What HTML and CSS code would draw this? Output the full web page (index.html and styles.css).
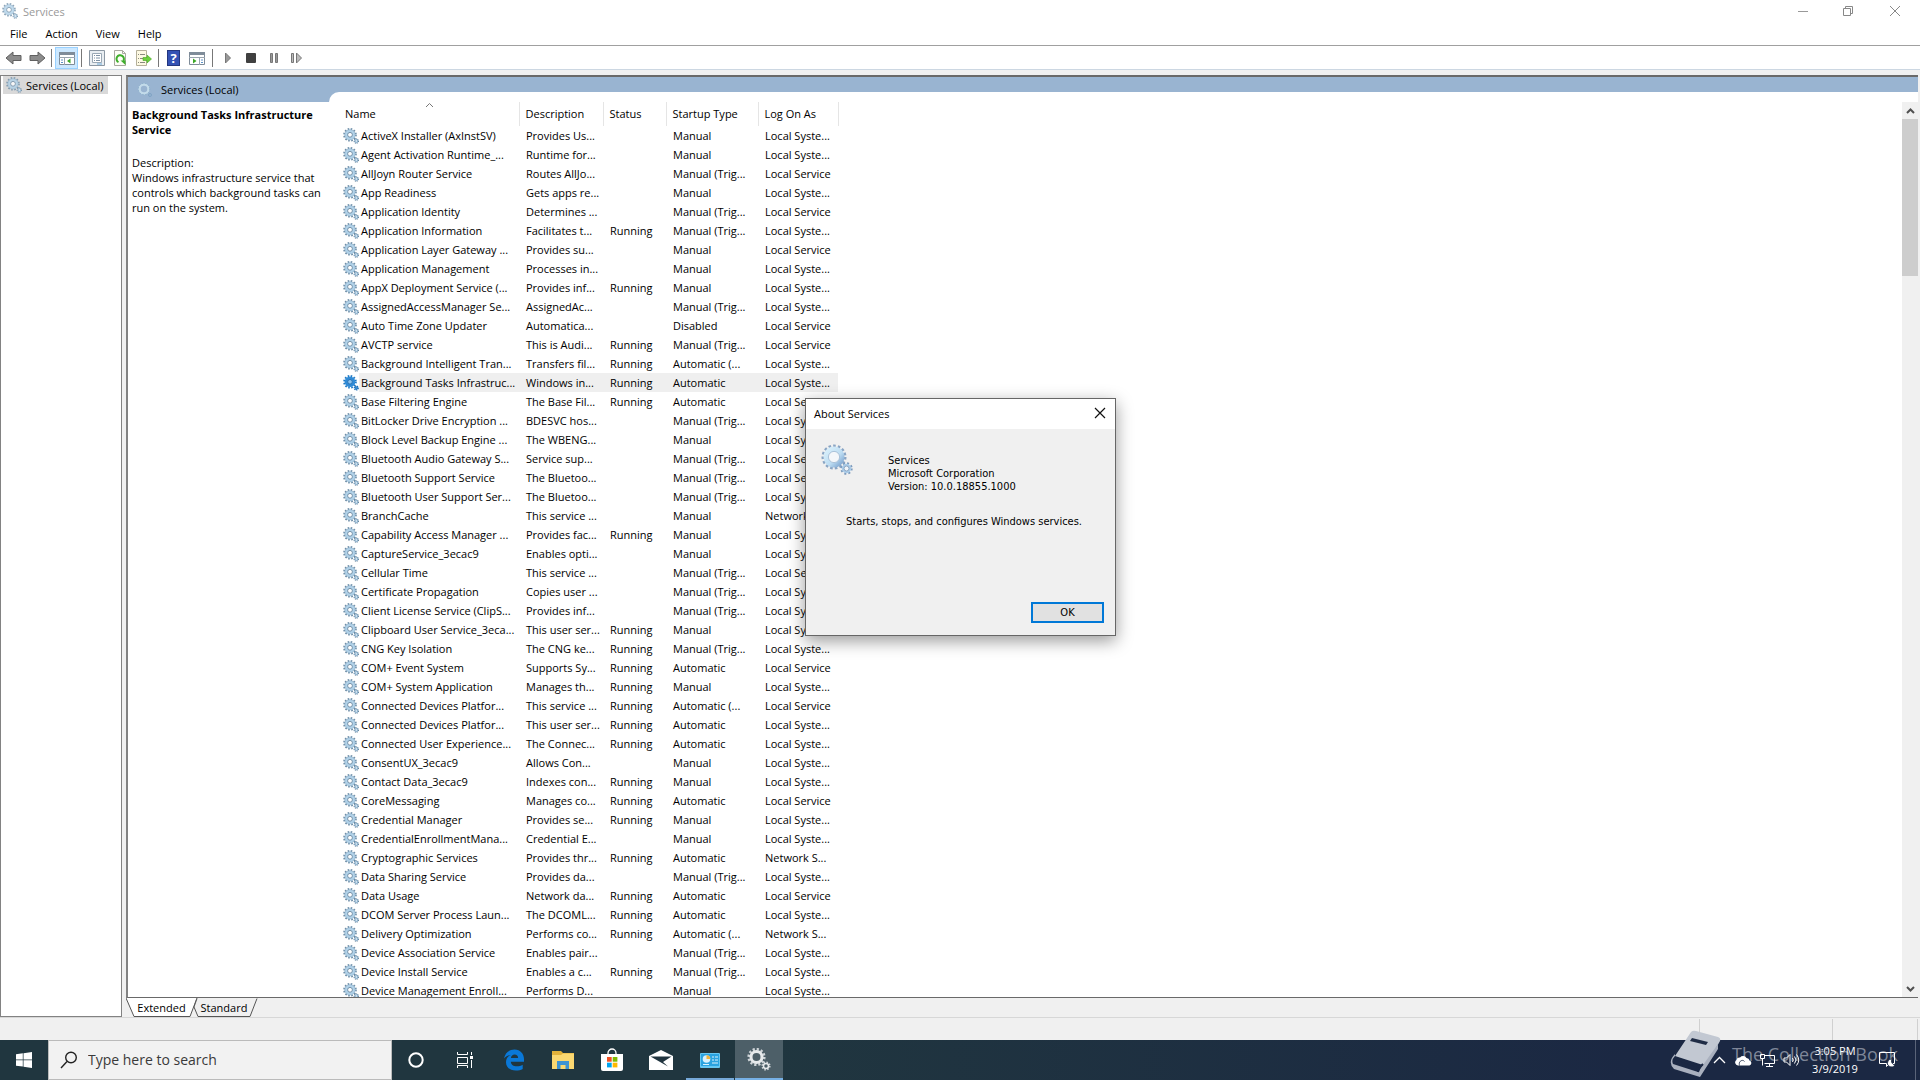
FILE: index.html
```html
<!DOCTYPE html>
<html lang="en">
<head>
<meta charset="utf-8">
<title>Services</title>
<link rel="stylesheet" href="styles.css">
</head>
<body>
<svg class="defs" aria-hidden="true">
  <symbol id="gear" viewBox="0 0 16 16">
    <circle cx="7" cy="6.800" r="5.900" fill="none" stroke="#6b8ba5" stroke-width="1.800" stroke-dasharray="1.600 1.490"/>
    <circle cx="7" cy="6.800" r="3.900" fill="#fff" stroke="#b1d2e9" stroke-width="2.800"/>
    <circle cx="7" cy="6.800" r="5.100" fill="none" stroke="#8fb0c9" stroke-width=".6"/>
    <circle cx="7" cy="6.800" r="2.400" fill="none" stroke="#64859f" stroke-width=".9"/>
    <circle cx="13.300" cy="13" r="2.100" fill="none" stroke="#5f7f99" stroke-width="1.200" stroke-dasharray="1 .65"/>
    <circle cx="13.300" cy="13" r="1.300" fill="#fff" stroke="#8fb4d0" stroke-width="1.200"/>
  </symbol>
  <symbol id="gear-selected" viewBox="0 0 16 16">
    <circle cx="7" cy="6.800" r="5.900" fill="none" stroke="#1d78c4" stroke-width="1.800" stroke-dasharray="1.600 1.490"/>
    <circle cx="7" cy="6.800" r="3.900" fill="#8fc3ee" stroke="#2f8ad6" stroke-width="2.800"/>
    <circle cx="7" cy="6.800" r="2.300" fill="none" stroke="#0f5ea5" stroke-width=".8"/>
    <circle cx="13.300" cy="13" r="1.800" fill="#3b8fd6" stroke="#1b6db5" stroke-width="1.600" stroke-dasharray="1 .65"/>
  </symbol>
  <linearGradient id="steel" x1="0" y1="0" x2="1" y2="1"><stop offset="0" stop-color="#d9f0fb"/><stop offset=".6" stop-color="#bcdcf2"/><stop offset="1" stop-color="#7fa6d0"/></linearGradient>
  <symbol id="gear-large" viewBox="0 0 34 34">
    <circle cx="14" cy="14" r="11.200" fill="none" stroke="#8aa5c4" stroke-width="2.600" stroke-dasharray="2.600 2.090"/>
    <circle cx="14" cy="14" r="8" fill="none" stroke="url(#steel)" stroke-width="5"/>
    <circle cx="14" cy="14" r="5.600" fill="#f4f7fa" stroke="#9db8d2" stroke-width=".8"/>
    <circle cx="26.500" cy="25.500" r="5.200" fill="none" stroke="#7d9bbd" stroke-width="2" stroke-dasharray="2 2.080"/>
    <circle cx="26.500" cy="25.500" r="3.700" fill="#f0f4f8" stroke="#a9cbe8" stroke-width="2"/>
    <circle cx="26.500" cy="25.500" r="2.500" fill="none" stroke="#6f8fb3" stroke-width=".8"/>
  </symbol>
  <symbol id="up" viewBox="0 0 9 6"><path d="M1 5 4.500 1.500 8 5" fill="none" stroke="currentColor" stroke-width="2"/></symbol>
</svg>

<header class="titlebar">
  <svg class="icon16 faded"><use href="#gear"/></svg>
  <h1 class="titlebar-text">Services</h1>
  <button class="winbtn" aria-label="Minimize"><svg width="12" height="12"><path d="M1 6.500h10" stroke="#999"/></svg></button>
  <button class="winbtn" aria-label="Restore"><svg width="12" height="12" fill="none" stroke="#888"><path d="M1.500 3.500h7v7h-7zM3.500 3.500v-2h7v7h-2"/></svg></button>
  <button class="winbtn" aria-label="Close"><svg width="12" height="12"><path d="M1 1l10 10M11 1 1 11" stroke="#888"/></svg></button>
</header>

<nav class="menubar" aria-label="Menu">
  <button>File</button><button>Action</button><button>View</button><button>Help</button>
</nav>

<div class="toolbar" role="toolbar">
  <button aria-label="Back"><svg width="18" height="16"><path d="M1 8l7-6v3.500h8v5H8V14z" fill="#8c8c8c" stroke="#606060"/></svg></button>
  <button aria-label="Forward"><svg width="18" height="16"><path d="M17 8l-7-6v3.500H2v5h8V14z" fill="#8c8c8c" stroke="#606060"/></svg></button>
  <span class="tool-sep"></span>
  <button class="pressed" aria-label="Show console tree"><svg width="18" height="16"><path d="M1.500 2.500h15v12h-15z" fill="#fff" stroke="#7f8c99"/><path d="M1 2h16v3H1z" fill="#7f8c99"/><path d="M1 7.500h16M6.500 7v8" stroke="#9aa5b0"/><path d="M3 10h2M3 12.500h2" stroke="#5c92c8"/><path d="M12.500 8.500v5L9 11z" fill="#3ba726"/></svg></button>
  <span class="tool-sep"></span>
  <button aria-label="Properties"><svg width="16" height="16"><path d="M.5.500h15v15H.5z" fill="#e9eef2" stroke="#8b97a3"/><path d="M3.500 3.500h9v9h-9z" fill="#fff" stroke="#9aa8b5"/><path d="M5 5.500h1M7 5.500h4M5 8h1M7 8h4M5 10.500h1M7 10.500h4" stroke="#7f93a6"/><path d="M8 14h5" stroke="#6aa9d8"/></svg></button>
  <button class="wide" aria-label="Refresh"><svg width="14" height="16"><path d="M1.500.500h8l3 3v12h-11z" fill="#fdfdf6" stroke="#a8a8a0"/><path d="M9.500.500v3h3" fill="none" stroke="#a8a8a0"/><path d="M5.500 12.200a3.700 3.700 0 1 1 4.800-1.200" fill="none" stroke="#3faf2c" stroke-width="2"/><path d="M7.500 10.500h5V15z" fill="#3faf2c"/></svg></button>
  <button aria-label="Export list"><svg width="17" height="16"><path d="M1.500.500h10v15h-10z" fill="#fdf9e3" stroke="#b5b09a"/><path d="M3 4.500h1M5 4.500h5M3 8.500h1M5 8.500h4M3 12.500h1M5 12.500h5" stroke="#8a8a80"/><path d="M8 7.500h4V5l4.500 4-4.500 4v-2.500H8z" fill="#6bd03c" stroke="#47a424" stroke-width=".6"/></svg></button>
  <span class="tool-sep"></span>
  <button aria-label="Help"><span class="help-icon">?</span></button>
  <button class="wide" aria-label="Show action pane"><svg width="18" height="16"><path d="M1.500 2.500h15v12h-15z" fill="#fff" stroke="#7f8c99"/><path d="M1 2h16v3H1z" fill="#7f8c99"/><path d="M1 7.500h16M11.500 7v8" stroke="#9aa5b0"/><path d="M13 10h2M13 12.500h2" stroke="#5c92c8"/><path d="M5 8.500v5L8.500 11z" fill="#3ba726"/></svg></button>
  <span class="tool-sep"></span>
  <button aria-label="Start service"><svg width="14" height="14"><path d="M4.500 2v10l5-5z" fill="#999" stroke="#777"/></svg></button>
  <button aria-label="Stop service"><svg width="12" height="14"><rect x="1" y="2" width="10" height="10" rx="1" fill="#404040"/></svg></button>
  <button aria-label="Pause service"><svg width="12" height="14"><path d="M2.500 2.500h2v9h-2zM7.500 2.500h2v9h-2z" fill="#999" stroke="#777"/></svg></button>
  <button aria-label="Restart service"><svg width="14" height="14"><path d="M1.500 2.500h2v9h-2zM6.500 2v10l5-5z" fill="#bbb" stroke="#777"/></svg></button>
</div>

<main class="workspace">
  <aside class="tree">
    <a class="tree-node" href="#list"><svg class="icon16 faded"><use href="#gear"/></svg>Services (Local)</a>
  </aside>

  <section class="snapin">
    <div class="panel">
      <div class="info">
        <div class="info-head"><svg class="icon14"><circle cx="6" cy="6" r="4.500" fill="none" stroke="#c3dbea" stroke-width="2.500"/><circle cx="6" cy="6" r="5.700" fill="none" stroke="#84a9c6" stroke-width=".8" stroke-dasharray="1.500 1.500"/><circle cx="12" cy="12" r="1.500" fill="none" stroke="#7fa3c4"/></svg><h2>Services (Local)</h2></div>
        <div class="info-body">
          <h3>Background Tasks Infrastructure Service</h3>
          <p class="info-label">Description:</p>
          <p>Windows infrastructure service that controls which background tasks can run on the system.</p>
        </div>
      </div>
      <div class="list" id="list">
        <div class="list-scroll">
          <table class="services">
            <colgroup><col class="c-name"><col class="c-desc"><col class="c-status"><col class="c-start"><col class="c-logon"></colgroup>
            <thead><tr><th class="sorted">Name<svg class="sort" width="9" height="6"><path d="M1 5 4.500 1.500 8 5" fill="none" stroke="#777"/></svg></th><th>Description</th><th>Status</th><th>Startup Type</th><th>Log On As</th></tr></thead>
            <tbody id="rows"></tbody>
          </table>
        </div>
        <div class="scrollbar">
          <button aria-label="Scroll up"><svg width="9" height="6"><use href="#up"/></svg></button>
          <div class="thumb"></div>
          <button class="down" aria-label="Scroll down"><svg width="9" height="6"><use href="#up"/></svg></button>
        </div>
      </div>
    </div>
    <div class="tabs" role="tablist">
      <button class="tab tab-extended" role="tab" aria-selected="true"><svg width="73" height="19"><path d="M0 0 8 18.500h56L71 0" fill="#fff" stroke="#555"/></svg><span>Extended</span></button>
      <button class="tab tab-standard" role="tab" aria-selected="false"><svg width="66" height="19"><path d="M4 .500 1 9l4 9.500h52L64 .500" fill="#f0f0f0" stroke="#555"/></svg><span>Standard</span></button>
    </div>
  </section>
</main>

<footer class="statusbar"><span></span><span></span><span></span></footer>

<div class="taskbar">
  <button class="task start" aria-label="Start"><svg width="16" height="16" fill="#fff"><path d="M0 2.300 6.800 1.300v6.200H0zM7.500 1.200 16 0v7.500H7.500zM0 8.300h6.800v6.300L0 13.700zM7.500 8.300H16V16l-8.500-1.200z"/></svg></button>
  <label class="search">
    <svg width="18" height="18" fill="none" stroke="#222" stroke-width="1.400"><circle cx="11" cy="6.500" r="5.300"/><path d="M7 10.500 1 17"/></svg>
    <input type="text" placeholder="Type here to search" aria-label="Search">
  </label>
  <button class="task" aria-label="Cortana"><svg width="18" height="18"><circle cx="9" cy="9" r="6.700" fill="none" stroke="#fff" stroke-width="2"/></svg></button>
  <button class="task" aria-label="Task view"><svg width="18" height="16" fill="none" stroke="#fff"><path d="M1.500 0v2.500h10V0M1.500 5.500h10v6h-10zM1.500 16v-2.500h10V16M15.500 0v3M15.500 8v8"/><path d="M14 4h3v3h-3z" fill="#fff" stroke="none"/></svg></button>
  <button class="task" aria-label="Edge"><svg width="22" height="22" viewBox="0 0 22 22"><path d="M1 9.500C2 4 6 .5 11.500.5 17.500.5 21 5 21 10v2.700H7.800c.2 3 2.700 4.600 5.900 4.600 2.300 0 4.300-.6 6-1.600v4.400c-1.900 1-4.200 1.500-6.900 1.500C6.800 21.600 3 18 3 13.200c0-3.300 1.800-6 4.800-7.300C4.900 6 2.600 7.300 1 9.500zM7.900 8.900h7.200c0-2.200-1.300-3.500-3.500-3.500-2 0-3.300 1.300-3.700 3.500z" fill="#0a78d7"/></svg></button>
  <button class="task" aria-label="File Explorer"><svg width="22" height="18"><path d="M0 0h9l2 2h11v16H0z" fill="#e3b23a"/><path d="M0 4h9l2-1.500h11V18H0z" fill="#fbd871"/><path d="M5 10h12v8h-3.500v-4h-5v4H5z" fill="#3f94d2"/></svg></button>
  <button class="task" aria-label="Store"><svg width="24" height="24"><path d="M8 7V5a4 4 0 0 1 8 0v2" fill="none" stroke="#fff" stroke-width="1.300"/><path d="M1 6h22v15q0 2-2 2H3q-2 0-2-2z" fill="#fff"/><path d="M7 9h4.700v4.700H7z" fill="#f25022"/><path d="M12.700 9h4.700v4.700h-4.700z" fill="#7fba00"/><path d="M7 14.700h4.700v4.700H7z" fill="#00a4ef"/><path d="M12.700 14.700h4.700v4.700h-4.700z" fill="#ffb900"/></svg></button>
  <button class="task" aria-label="Mail"><svg width="24" height="20"><path d="M0 6 12 0l12 6v14H0z" fill="#fff"/><path d="M1.500 6.500h21L14 12l5 4.500z" fill="#20343f"/></svg></button>
  <button class="task running" aria-label="Control Panel"><svg width="20" height="15"><rect width="20" height="15" rx="1" fill="#66c7f2"/><rect x="1" y="1" width="18" height="12" fill="#2ba3e0"/><circle cx="6.500" cy="6" r="3.800" fill="#d9f1fc"/><path d="M6.500 6V2.200A3.800 3.800 0 0 1 10.300 6z" fill="#f2b43c"/><path d="M12 4h2M15 4h3M12 7h2M15 7h3M12 10h6M3 11.500h6" stroke="#d9f1fc"/></svg></button>
  <button class="task active" aria-label="Services"><svg width="24" height="24" fill="none"><circle cx="9.500" cy="9" r="7.800" stroke="#cfd4d8" stroke-width="2.600" stroke-dasharray="2.200 1.880"/><circle cx="9.500" cy="9" r="5.500" stroke="#e6e9eb" stroke-width="3"/><circle cx="19" cy="18" r="3.600" stroke="#cfd4d8" stroke-width="2" stroke-dasharray="1.500 1.320"/><circle cx="19" cy="18" r="2.500" stroke="#e6e9eb" stroke-width="1.500"/></svg></button>

  <div class="tray">
    <button aria-label="Show hidden icons"><svg width="13" height="8"><path d="M1 7l5.500-5.500L12 7" fill="none" stroke="#fff" stroke-width="1.300"/></svg></button>
    <button aria-label="OneDrive"><svg width="17" height="11"><path d="M3 10.500A3 3 0 0 1 1.500 5 3 3 0 0 1 5 2.500a4 4 0 0 1 6.500.5 3 3 0 0 1 3 2.500 2.600 2.600 0 0 1 0 5z" fill="#fff"/><path d="M4.500 10.500C3 6 8 4 9.500 6.500" fill="none" stroke="#1b2843" stroke-width=".8"/></svg></button>
    <button aria-label="Network"><svg width="17" height="15" fill="none" stroke="#fff"><path d="M5.500 2.500h10v8h-10M10.500 10.500v3M7 13.500h7M1.500 1.500h4v4h-4zM3.500 5.500v7"/></svg></button>
    <button aria-label="Volume"><svg width="17" height="14" fill="none" stroke="#fff"><path d="M1 5h2.500L7 1.500v11L3.500 9H1zM9.500 5q1.500 2 0 4M11.500 3.500q3 3.500 0 7M13.500 1.500q4.500 5.500 0 11"/></svg></button>
    <time class="clock" datetime="2019-03-09T15:05"><span>3:05 PM</span><span>3/9/2019</span></time>
    <button class="notify" aria-label="Notifications"><svg width="18" height="18" fill="none" stroke="#fff"><path d="M1.500 1.500h15v11h-5l-3 3v-3h-7z"/><path d="M14 8a4 4 0 1 0 3 6 4 4 0 0 1-3-6z" fill="#fff" stroke="#1b2843" stroke-width=".8"/></svg></button>
  </div>
  <div class="watermark" aria-hidden="true">
    <svg width="52" height="48"><path d="M21 2Q23 0 26 1l22 6q3 1 2 4L36 36 5 26z" fill="#c2c8d2"/><path d="M5 26 Q1 30 3 34L28 42 48 14v5L30 47 4 39Q-3 32 5 24z" fill="#a9b0be"/><path d="M6 29 30 37 33 34M30 37l-2 5" fill="none" stroke="#1b2843" stroke-width="2"/><path d="M22 8l16 4-2 3-16-4z" fill="#1f2c45"/></svg>
    <span>The Collection Book</span>
  </div>
</div>

<div class="about" role="dialog" aria-labelledby="about-title">
  <header class="about-head"><h2 id="about-title">About Services</h2><button aria-label="Close"><svg width="12" height="12"><path d="M1 1l10 10M11 1 1 11" stroke="#111" stroke-width="1.200"/></svg></button></header>
  <div class="about-body">
    <div class="about-product">
      <svg class="icon34"><use href="#gear-large"/></svg>
      <p>Services<br>Microsoft Corporation<br>Version: 10.0.18855.1000</p>
    </div>
    <p class="about-note">Starts, stops, and configures Windows services.</p>
    <button class="ok">OK</button>
  </div>
</div>
<script src="rows.js"></script>
</body>
</html>
```
FILE: styles.css
```css
* { box-sizing: border-box; }
body {
  margin: 0;
  height: 100vh;
  display: flex;
  flex-direction: column;
  overflow: hidden;
  background: #f0f0f0;
  color: #000;
  font: 11px/15px "Open Sans", "Noto Sans", sans-serif;
}
h1, h2, h3, p { margin: 0; font-size: inherit; font-weight: 400; }
button { border: 0; padding: 0; background: none; font: inherit; color: inherit; }
svg { display: block; flex: none; }
.defs { position: absolute; width: 0; height: 0; }
.icon14 { width: 14px; height: 14px; }
.icon16 { width: 16px; height: 16px; }
.icon34 { width: 34px; height: 34px; }
.faded { opacity: .8; }

.titlebar { display: flex; align-items: center; height: 22px; padding-left: 2px; background: #fff; }
.titlebar-text { flex: 1; padding-left: 5px; color: #999; }
.winbtn { width: 45px; height: 22px; display: grid; place-items: center; }
.winbtn:last-child { width: 50px; }

.menubar { display: flex; gap: 18px; height: 24px; padding: 0 10px; background: #fff; border-bottom: 1px solid #a0a0a0; }

.toolbar { display: flex; align-items: center; height: 24px; padding-left: 2px; background: #fff; border-bottom: 1px solid #ccd7e2; }
.toolbar button { width: 23px; height: 22px; display: grid; place-items: center; }
.toolbar .wide { width: 24px; }
.toolbar .pressed { background: #cce8ff; border: 1px solid #99d1ff; }
.tool-sep { width: 1px; height: 18px; margin: 0 3px; background: #777; }
.help-icon { width: 13px; height: 16px; background: #3452b4; border: 1px solid #23367f; color: #fff; font-size: 13px; line-height: 14px; font-weight: 700; }

.workspace { flex: 1; min-height: 0; display: flex; gap: 4px; padding: 5px 2px 0 0; }
.tree { width: 122px; padding: 0 2px; background: #fff; border: 1px solid #828282; }
.tree-node { display: inline-flex; align-items: center; height: 18px; gap: 4px; padding: 0 4px 0 3px; background: #d9d9d9; color: #000; text-decoration: none; }
.snapin { flex: 1; min-width: 0; display: flex; flex-direction: column; }
.panel { flex: 1; min-height: 0; display: flex; background: #99b4d1; border-top: 2px solid #696969; border-left: 2px solid #828282; border-bottom: 1px solid #696969; }
.info { width: 201px; display: flex; flex-direction: column; }
.info-head { height: 25px; display: flex; align-items: center; gap: 9px; padding-left: 10px; }
.info-body { flex: 1; padding: 5px 0 0 4px; background: #fff; }
.info-body h3 { font-weight: 700; padding-right: 10px; }
.info-label { margin-top: 18px; }
.list { flex: 1; min-width: 0; display: flex; margin-top: 15px; padding-top: 10px; background: #fff; border-top-left-radius: 10px; }
.list-scroll { flex: 1; min-width: 0; overflow: hidden; padding-left: 8px; }

.services { width: 501px; table-layout: fixed; border-collapse: collapse; }
.c-name { width: 182px; }
.c-desc { width: 84px; }
.c-status { width: 63px; }
.c-start { width: 92px; }
.c-logon { width: 80px; }
.services th { position: relative; height: 24px; padding: 0 0 2px 6px; border-right: 1px solid #e5e5e5; text-align: left; font-weight: 400; }
.services th.sorted { padding-left: 8px; }
.sort { position: absolute; top: 0; left: 88px; }
.services td { height: 19px; padding: 0 0 0 7px; white-space: nowrap; overflow: hidden; }
.services td:first-child { padding-left: 6px; }
.service-name { display: flex; align-items: center; height: 19px; }
.service-name span { flex: 1; padding-left: 2px; }
.selected td:not(:first-child), .selected .service-name span { background: #efefef; line-height: 19px; }

.scrollbar { width: 16px; display: flex; flex-direction: column; background: #f0f0f0; color: #505050; }
.scrollbar button { height: 17px; display: grid; place-items: center; }
.scrollbar .down { margin-top: auto; }
.scrollbar .down svg { transform: rotate(180deg); }
.thumb { height: 157px; background: #cdcdcd; }

.tabs { display: flex; height: 19px; }
.tab { position: relative; height: 19px; }
.tab svg { position: absolute; top: 0; left: 0; }
.tab span { position: relative; }
.tab-extended { width: 67px; padding-left: 4px; }
.tab-standard { width: 62px; }

.statusbar { display: flex; height: 23px; justify-content: flex-end; padding-right: 1px; border-top: 1px solid #d7d7d7; }
.statusbar span { border-left: 1px solid #d0d0d0; margin-top: 1px; width: 133px; }
.statusbar span:nth-child(2) { width: 85px; }
.statusbar span:nth-child(3) { width: 2px; }

.taskbar { position: relative; display: flex; height: 40px; background: linear-gradient(90deg, #20363f 0%, #20363f 40%, #1b2843 85%, #1b2843 100%); color: #fff; }
.task { width: 48px; height: 40px; display: grid; place-items: center; margin-right: 1px; }
.start { margin-right: 0; }
.search { display: flex; align-items: center; width: 344px; height: 40px; padding-left: 11px; gap: 10px; background: #f2f2f2; border: 1px solid #bbb; }
.search input { flex: 1; min-width: 0; border: 0; padding: 0; background: none; font: 14px/20px "Open Sans", "Noto Sans", sans-serif; }
.search input::placeholder { color: #3a3a3a; opacity: 1; }
.running { box-shadow: inset 0 -2px #76a9d8; }
.active { background: #4d5f68; box-shadow: inset 0 -2px #76b0e5; }
.tray { display: flex; align-items: center; margin: 0 4px 0 auto; padding-right: 8px; border-right: 1px solid #5a6479; z-index: 1; }
.tray button { width: 24px; height: 40px; display: grid; place-items: center; }
.clock { width: 64px; display: flex; flex-direction: column; text-align: center; line-height: 18px; }
.tray .notify { width: 40px; }
.watermark { position: absolute; right: 22px; bottom: 2px; display: flex; align-items: center; gap: 10px; color: #7f8799; font-size: 18px; line-height: 24px; white-space: nowrap; }

.about { position: absolute; top: 398px; left: calc(50% - 155px); width: 311px; height: 238px; display: flex; flex-direction: column; background: #f0f0f0; border: 1px solid #666; box-shadow: 0 5px 16px rgba(0, 0, 0, .4); }
.about-head { display: flex; align-items: center; justify-content: space-between; height: 30px; padding: 0 8px 2px; background: #fff; }
.about-head button { width: 14px; height: 14px; display: grid; place-items: center; }
.about-body { flex: 1; display: flex; flex-direction: column; padding: 14px 11px 12px 14px; font: 11px/13px "DejaVu Sans Condensed", "Liberation Sans", sans-serif; }
.about-product { display: flex; gap: 34px; }
.about-product p { padding-top: 11px; }
.about-note { margin-top: 22px; padding-left: 26px; }
.ok { align-self: flex-end; margin-top: auto; width: 73px; height: 21px; background: #e1e1e1; border: 2px solid #0078d7; }
```
FILE: rows.js
```js
const LS = "Local Syste...", LV = "Local Service", NS = "Network S...";
const M = "Manual", T = "Manual (Trig...", A = "Automatic", AD = "Automatic (...", R = "Running";
const services = [
  ["ActiveX Installer (AxInstSV)", "Provides Us...", "", M, LS],
  ["Agent Activation Runtime_...", "Runtime for...", "", M, LS],
  ["AllJoyn Router Service", "Routes AllJo...", "", T, LV],
  ["App Readiness", "Gets apps re...", "", M, LS],
  ["Application Identity", "Determines ...", "", T, LV],
  ["Application Information", "Facilitates t...", R, T, LS],
  ["Application Layer Gateway ...", "Provides su...", "", M, LV],
  ["Application Management", "Processes in...", "", M, LS],
  ["AppX Deployment Service (...", "Provides inf...", R, M, LS],
  ["AssignedAccessManager Se...", "AssignedAc...", "", T, LS],
  ["Auto Time Zone Updater", "Automatica...", "", "Disabled", LV],
  ["AVCTP service", "This is Audi...", R, T, LV],
  ["Background Intelligent Tran...", "Transfers fil...", R, AD, LS],
  ["Background Tasks Infrastruc...", "Windows in...", R, A, LS],
  ["Base Filtering Engine", "The Base Fil...", R, A, LV],
  ["BitLocker Drive Encryption ...", "BDESVC hos...", "", T, LS],
  ["Block Level Backup Engine ...", "The WBENG...", "", M, LS],
  ["Bluetooth Audio Gateway S...", "Service sup...", "", T, LV],
  ["Bluetooth Support Service", "The Bluetoo...", "", T, LV],
  ["Bluetooth User Support Ser...", "The Bluetoo...", "", T, LS],
  ["BranchCache", "This service ...", "", M, NS],
  ["Capability Access Manager ...", "Provides fac...", R, M, LS],
  ["CaptureService_3ecac9", "Enables opti...", "", M, LS],
  ["Cellular Time", "This service ...", "", T, LV],
  ["Certificate Propagation", "Copies user ...", "", T, LS],
  ["Client License Service (ClipS...", "Provides inf...", "", T, LS],
  ["Clipboard User Service_3eca...", "This user ser...", R, M, LS],
  ["CNG Key Isolation", "The CNG ke...", R, T, LS],
  ["COM+ Event System", "Supports Sy...", R, A, LV],
  ["COM+ System Application", "Manages th...", R, M, LS],
  ["Connected Devices Platfor...", "This service ...", R, AD, LV],
  ["Connected Devices Platfor...", "This user ser...", R, A, LS],
  ["Connected User Experience...", "The Connec...", R, A, LS],
  ["ConsentUX_3ecac9", "Allows Con...", "", M, LS],
  ["Contact Data_3ecac9", "Indexes con...", R, M, LS],
  ["CoreMessaging", "Manages co...", R, A, LV],
  ["Credential Manager", "Provides se...", R, M, LS],
  ["CredentialEnrollmentMana...", "Credential E...", "", M, LS],
  ["Cryptographic Services", "Provides thr...", R, A, NS],
  ["Data Sharing Service", "Provides da...", "", T, LS],
  ["Data Usage", "Network da...", R, A, LV],
  ["DCOM Server Process Laun...", "The DCOML...", R, A, LS],
  ["Delivery Optimization", "Performs co...", R, AD, NS],
  ["Device Association Service", "Enables pair...", "", T, LS],
  ["Device Install Service", "Enables a c...", R, T, LS],
  ["Device Management Enroll...", "Performs D...", "", M, LS],
];
const selectedIndex = 13;
document.getElementById("rows").innerHTML = services.map(([name, ...rest], i) => {
  const selected = i === selectedIndex;
  const icon = selected ? "gear-selected" : "gear";
  const cells = rest.map(text => `<td>${text}</td>`).join("");
  return `<tr${selected ? ' class="selected"' : ""}><td><div class="service-name"><svg class="icon16"><use href="#${icon}"/></svg><span>${name}</span></div></td>${cells}</tr>`;
}).join("");
```
